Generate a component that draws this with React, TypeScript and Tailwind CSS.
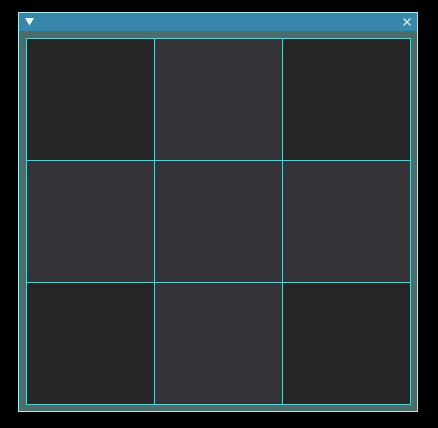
import React from "react";

const cells = [
  "bg-[#262626]", "bg-[#333338]", "bg-[#262626]",
  "bg-[#333338]", "bg-[#333338]", "bg-[#333338]",
  "bg-[#262626]", "bg-[#333338]", "bg-[#262626]",
];

export default function App() {
  return (
    <div className="w-[438px] h-[428px] bg-black pt-[12px] pl-[18px]" style={{ fontFamily: "'DejaVu Sans', sans-serif" }}>
      <div className="w-[400px] h-[400px] border border-[#a3eef0] flex flex-col">
        <div className="h-[18px] bg-[#3887aa] flex items-center justify-between pl-[6px] pr-[6px]">
          <svg width="9" height="8" viewBox="0 0 9 8">
            <polygon points="0,0 9,0 4.5,7.5" fill="#e8ffff" />
          </svg>
          <svg width="8" height="8" viewBox="0 0 8 8">
            <path d="M0.5 0.5 L7.5 7.5 M7.5 0.5 L0.5 7.5" stroke="#e0f4f8" strokeWidth="1.2" />
          </svg>
        </div>
        <div className="flex-1 bg-[#4a6e6c] pt-[7px] pl-[7px]">
          <div className="grid grid-cols-[127px_127px_127px] grid-rows-[121px_121px_121px] gap-px p-px bg-[#5ccfd2] w-[385px] h-[367px]">
            {cells.map((c, i) => (
              <div key={i} className={c} />
            ))}
          </div>
        </div>
      </div>
    </div>
  );
}
